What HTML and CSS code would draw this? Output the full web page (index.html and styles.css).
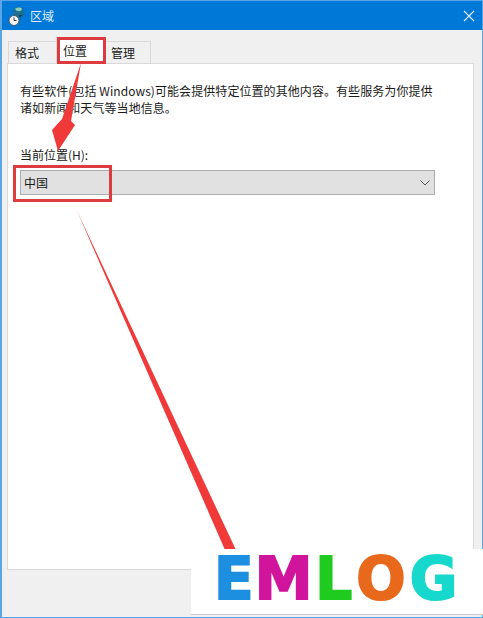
FILE: index.html
```html
<!DOCTYPE html>
<html lang="zh-CN">

<head>
    <meta charset="UTF-8">
    <meta name="viewport" content="width=device-width, initial-scale=1.0">
    <title>区域</title>
    <link rel="stylesheet" href="styles.css">
</head>

<body>
    <div class="window">
        <div class="titlebar">
            <svg class="app-icon" width="17" height="22" viewBox="0 0 17 22">
                <circle cx="10.5" cy="7.5" r="5.5" fill="#1f6f8f"/>
                <path d="M7 4c2-2 6-2 7 0-1 3-5 3-7 0z" fill="#8fd0b8"/>
                <path d="M11 10c2 0 3 0 4-1-1 2-2 3-4 3z" fill="#0f3f5f"/>
                <circle cx="6" cy="15.500" r="5" fill="#f4f4f4" stroke="#46586a" stroke-width="1"/>
                <path d="M6 12.500v3h2.500" fill="none" stroke="#333" stroke-width="1"/>
            </svg>
            <span class="title">区域</span>
            <svg class="close" width="12" height="12" viewBox="0 0 12 12">
                <path d="M1 1l10 10M11 1L1 11" stroke="#e4f1fb" stroke-width="1.1" fill="none"/>
            </svg>
        </div>
        <div class="content">
            <div class="tabs">
                <div class="tab">格式</div>
                <div class="tab active">位置</div>
                <div class="tab last">管理</div>
            </div>
            <div class="pane">
                <p class="desc">有些软件(包括 Windows)可能会提供特定位置的其他内容。有些服务为你提供<br>诸如新闻和天气等当地信息。</p>
                <label class="field-label">当前位置(H):</label>
                <div class="select">
                    <span>中国</span>
                    <svg width="10" height="6" viewBox="0 0 10 6">
                        <path d="M0.5 0.5L5 5l4.500-4.500" fill="none" stroke="#555" stroke-width="1"/>
                    </svg>
                </div>
            </div>
        </div>
    </div>

    <!-- red annotations drawn over the screenshot -->
    <svg class="marks" width="483" height="618" viewBox="0 0 483 618">
        <rect x="58.5" y="38.5" width="46" height="24" fill="none" stroke="#dc3c40" stroke-width="3"/>
        <rect x="14.5" y="166.5" width="96" height="34" fill="none" stroke="#dc3c40" stroke-width="3"/>
        <path d="M81 63L71 121 75 125 58 151 52 130 62 119z" fill="#f03a3a"/>
        <path d="M77 211L236 550 225 550z" fill="#f03a3a"/>
    </svg>

    <div class="logo">
        <div class="logo-text"><span class="l-e">E</span><span class="l-m">M</span><span class="l-l">L</span><span class="l-o">O</span><span class="l-g">G</span></div>
    </div>
</body>

</html>
```

FILE: styles.css
```css
html, body {
    margin: 0;
    padding: 0;
}

body {
    width: 483px;
    height: 618px;
    overflow: hidden;
    position: relative;
    background: #fff;
    font-family: "Noto Sans CJK SC", "Liberation Sans", sans-serif;
    font-size: 12px;
    color: #1a1a1a;
}

.window {
    height: 618px;
    box-sizing: border-box;
    display: flex;
    flex-direction: column;
    border: 1px solid #5aa5e6;
    border-width: 1px 1px 1px 2px;
    background: #f0f0f0;
}

.titlebar {
    height: 29px;
    flex: none;
    display: flex;
    align-items: center;
    padding: 0 7px 0 6px;
    background: #0078d7;
    color: #dcecf9;
}

.app-icon {
    margin-right: 5px;
}

.title {
    font-size: 12px;
    flex: 1;
}

.content {
    flex: 1;
    display: flex;
    flex-direction: column;
    padding: 7px 8px 47px 5px;
}

.tabs {
    display: flex;
    align-items: flex-end;
    padding-left: 1px;
    height: 26px;
    flex: none;
}

.tab {
    width: 41px;
    height: 21px;
    line-height: 21px;
    padding-left: 6px;
    background: #f0f0f0;
    border: 1px solid #d9d9d9;
    border-bottom: none;
    margin-right: -1px;
}

.tab.active {
    height: 26px;
    line-height: 26px;
    background: #fff;
    position: relative;
    margin-bottom: -1px;
}

.tab.last {
    width: 39px;
}

.pane {
    flex: 1;
    background: #fff;
    border: 1px solid #d9d9d9;
    padding: 18px 12px 0 12px;
}

.desc {
    margin: 0 0 30px;
    line-height: 17px;
    white-space: nowrap;
    letter-spacing: 0.07px;
}

.field-label {
    display: block;
    line-height: 17px;
    margin-bottom: 7px;
}

.select {
    width: 407px;
    height: 23px;
    display: flex;
    align-items: center;
    justify-content: space-between;
    padding: 0 3px;
    background: #e1e1e1;
    border: 1px solid #adadad;
}

.select svg {
    margin-right: 1px;
}

.marks {
    position: absolute;
    left: 0;
    top: 0;
}

.logo {
    position: absolute;
    left: 191px;
    top: 549px;
    width: 292px;
    height: 65px;
    background: #fff;
    border-bottom: 1px solid #c9c9d2;
}

.logo-text {
    font-family: "DejaVu Sans", sans-serif;
    font-weight: 700;
    font-size: 58px;
    line-height: 60px;
    padding-left: 23px;
    white-space: nowrap;
    -webkit-text-stroke: 2px currentColor;
}

.l-e { color: #1c8fe0; }
.l-m { color: #d0149c; margin-left: 1px; }
.l-l { color: #1ecb1e; margin-left: 3px; }
.l-o { color: #e8691c; margin-left: 4px; }
.l-g { color: #17d8cc; margin-left: 4px; }
```
